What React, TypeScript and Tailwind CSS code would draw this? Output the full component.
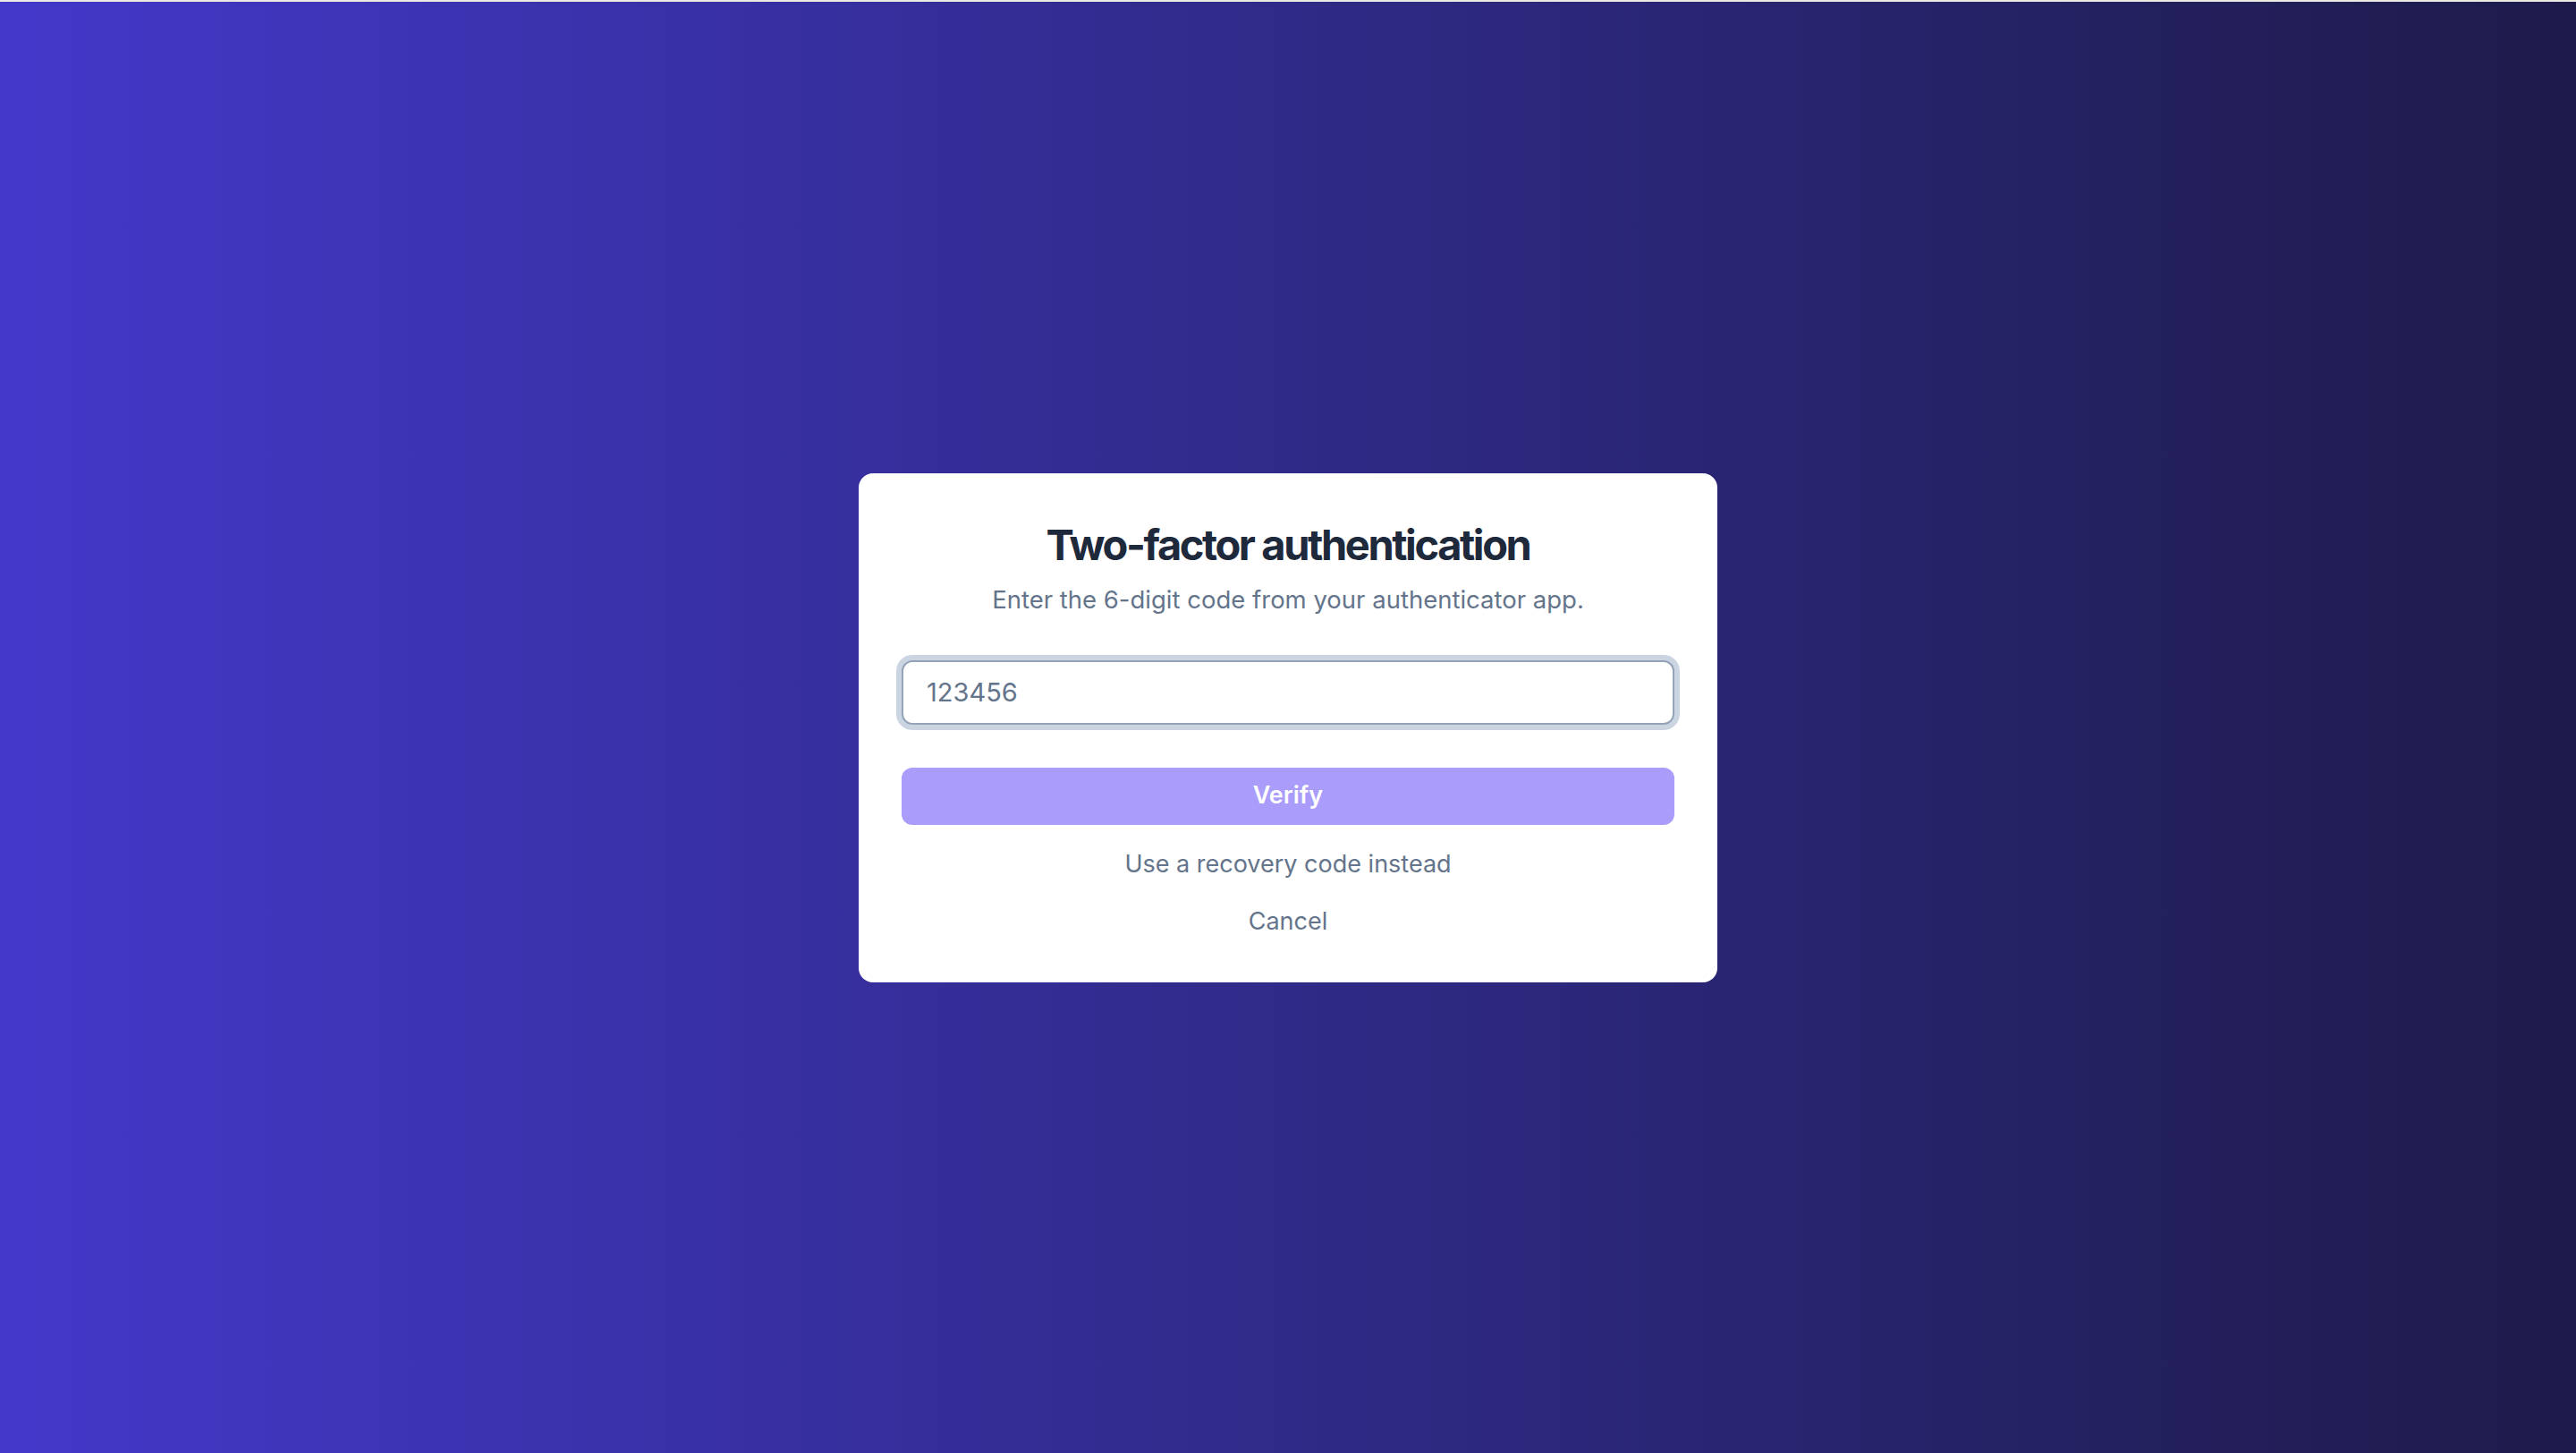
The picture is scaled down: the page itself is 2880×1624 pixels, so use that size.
import { useState } from 'react'

// ---------------------------------------------------------------------------
// Two-factor authentication screen
// ---------------------------------------------------------------------------

export default function App() {
  const [code, setCode] = useState('')

  return (
    <div
      className="flex min-h-screen flex-col"
      style={{ fontFamily: 'Inter, "Noto Sans", sans-serif' }}
    >
      {/* thin strip along the top edge */}
      <div className="h-[2px] bg-[#ecebe3]" />

      <main className="flex flex-1 items-center justify-center bg-gradient-to-r from-[#4338ca] to-[#1e1b4b]">
        <div className="w-[960px] rounded-[16px] bg-white px-[48px] pt-[48px] pb-[48px]">
          <h1 className="text-center text-[47px] leading-[64px] font-bold tracking-[-2.4px] text-[#1e293b]">
            Two-factor authentication
          </h1>
          <p className="mt-[9px] text-center text-[27.5px] leading-[40px] text-[#64748b]">
            Enter the 6-digit code from your authenticator app.
          </p>

          <input
            autoFocus
            value={code}
            onChange={(e) => setCode(e.target.value)}
            placeholder="123456"
            inputMode="numeric"
            className="mt-[48px] block h-[72px] w-full rounded-[12px] border-2 border-[#94a3b8] bg-white px-[26px] text-[29px] text-[#0f172a] caret-[#0f172a] ring-[6px] ring-[#cbd5e1] outline-none placeholder:text-[#64748b]"
          />

          <button
            type="button"
            className="mt-[48px] flex h-[64px] w-full items-center justify-center rounded-[12px] bg-[#a99cfb] text-[27px] font-semibold text-white"
          >
            Verify
          </button>

          <div className="mt-[24px] flex flex-col items-center gap-[24px]">
            <button type="button" className="text-[27px] leading-[40px] text-[#64748b]">
              Use a recovery code instead
            </button>
            <button type="button" className="text-[27px] leading-[40px] text-[#64748b]">
              Cancel
            </button>
          </div>
        </div>
      </main>
    </div>
  )
}
